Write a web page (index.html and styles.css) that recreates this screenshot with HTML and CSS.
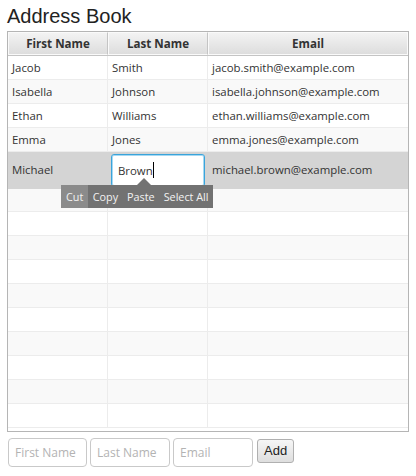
FILE: index.html
```html
<!DOCTYPE html>
<html>
<head>
<meta charset="utf-8">
<link rel="stylesheet" href="styles.css">
</head>
<body>
<div class="app">
  <h1 class="title">Address Book</h1>
  <div class="table">
    <div class="head row">
      <div class="hc">First Name</div>
      <div class="hc">Last Name</div>
      <div class="hc">Email</div>
    </div>
    <div class="body">
      <div class="row"><div class="c">Jacob</div><div class="c">Smith</div><div class="c">jacob.smith@example.com</div></div>
      <div class="row alt"><div class="c">Isabella</div><div class="c">Johnson</div><div class="c">isabella.johnson@example.com</div></div>
      <div class="row"><div class="c">Ethan</div><div class="c">Williams</div><div class="c">ethan.williams@example.com</div></div>
      <div class="row alt"><div class="c">Emma</div><div class="c">Jones</div><div class="c">emma.jones@example.com</div></div>
      <div class="row sel">
        <div class="c">Michael</div>
        <div class="c edit"><div class="field">Brown<span class="caret"></span></div></div>
        <div class="c">michael.brown@example.com</div>
      </div>
      <div class="row alt"><div class="c"></div><div class="c"></div><div class="c"></div></div>
      <div class="row"><div class="c"></div><div class="c"></div><div class="c"></div></div>
      <div class="row alt"><div class="c"></div><div class="c"></div><div class="c"></div></div>
      <div class="row"><div class="c"></div><div class="c"></div><div class="c"></div></div>
      <div class="row alt"><div class="c"></div><div class="c"></div><div class="c"></div></div>
      <div class="row"><div class="c"></div><div class="c"></div><div class="c"></div></div>
      <div class="row alt"><div class="c"></div><div class="c"></div><div class="c"></div></div>
      <div class="row"><div class="c"></div><div class="c"></div><div class="c"></div></div>
      <div class="row alt"><div class="c"></div><div class="c"></div><div class="c"></div></div>
      <div class="row"><div class="c"></div><div class="c"></div><div class="c"></div></div>
    </div>
    <div class="menu">
      <span class="arrow"></span>
      <div class="mi hover">Cut</div>
      <div class="mi">Copy</div>
      <div class="mi">Paste</div>
      <div class="mi">Select All</div>
    </div>
  </div>
  <div class="form">
    <div class="inp">First Name</div>
    <div class="inp">Last Name</div>
    <div class="inp">Email</div>
    <div class="btn">Add</div>
  </div>
</div>
</body>
</html>
```
FILE: styles.css
```css
* { box-sizing: border-box; }
html, body { margin: 0; padding: 0; background: #fff; }
body { width: 416px; height: 476px; overflow: hidden; }
.app { padding: 5px 7px 0 7px; font-family: "Open Sans", "Noto Sans", sans-serif; font-size: 11.4px; color: #333; }
.title { margin: 0; font-family: "Liberation Sans", Arial, sans-serif; font-weight: normal; font-size: 20px; line-height: 22px; color: #222; height: 26px; }
.table { position: relative; width: 402px; border: 1px solid #b5b5b5; background: #fff; }
.row { display: grid; grid-template-columns: 100px 100px 1fr; height: 24px; }
.head { height: 24px; background: linear-gradient(#f4f4f4, #dcdcdc); border-bottom: 1px solid #c4c4c4; }
.hc { font-weight: bold; text-align: center; line-height: 21px; color: #333; border: 1px solid #fafafa; border-right-color: #c4c4c4; font-size: 11.6px; }
.hc:last-child { border-right-color: #fafafa; }
.body { height: 375px; overflow: hidden; }
.c { line-height: 23px; padding-left: 4px; border-right: 1px solid #ececec; border-bottom: 1px solid #ececec; white-space: nowrap; overflow: hidden; color: #333; }
.c:last-child { border-right: none; }
.alt { background: #f9f9f9; }
.sel { height: 36px; background: #d4d4d4; }
.sel .c { line-height: 35px; border-right-color: #d4d4d4; border-bottom-color: #d4d4d4; }
.sel .edit { padding: 2px 2px 1px 3px; overflow: visible; }
.field { height: 33px; border: 1px solid #3aa4db; border-radius: 3px; background: #fff; box-shadow: 0 0 0 1px #a6d8f2 inset; line-height: 31px; padding-left: 6px; color: #333; position: relative; }
.caret { display: inline-block; width: 1px; height: 16px; background: #000; vertical-align: -3px; }
.menu { position: absolute; left: 53px; top: 153px; height: 23px; display: flex; background: #727272; color: #f2f2f2; font-size: 10.8px; line-height: 23px; }
.arrow { position: absolute; left: 76px; top: -7px; width: 0; height: 0; border-left: 7px solid transparent; border-right: 7px solid transparent; border-bottom: 7px solid #727272; }
.mi { padding: 0 4.5px; }
.mi.hover { background: #8b8b8b; padding: 0 5px 0 5px; }
.form { display: flex; gap: 3px; margin-top: 6px; align-items: flex-start; }
.inp { width: 80px; height: 29px; border: 1px solid #c9c9c9; border-radius: 4px; color: #b3b3b3; line-height: 27px; padding-left: 6px; background: #fff; font-size: 12px; }
.inp:first-child { margin-left: 1px; width: 79px; }
.btn { margin-left: 1px; margin-top: 1px; height: 24px; padding: 0 6px; border: 1px solid #b0b0b0; border-radius: 3px; background: linear-gradient(#f6f6f6, #dedede); font-family: "Liberation Sans", Arial, sans-serif; font-size: 13px; line-height: 22px; color: #222; }
```
